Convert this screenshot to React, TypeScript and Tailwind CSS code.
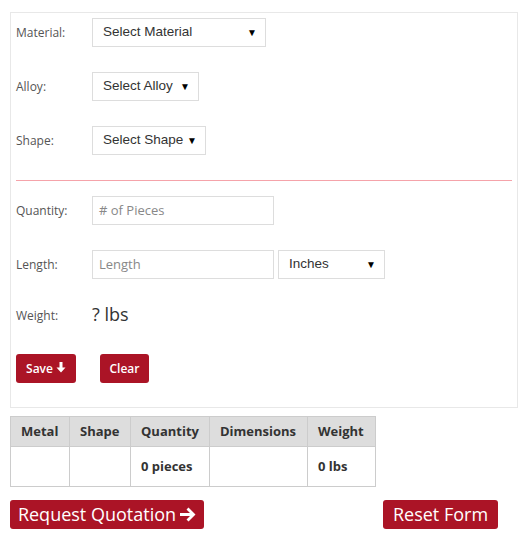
import React from 'react';

const labelCls = 'w-[76px] shrink-0 text-[12px] text-[#555]';
const boxCls =
  'flex items-center border border-[#ddd] bg-white h-[29px] text-[13px] text-[#333]';

const Caret = () => <span className="text-[10px] leading-none text-black">▼</span>;

const SelectBox: React.FC<{ text: string; width: string }> = ({ text, width }) => (
  <div className={`${boxCls} ${width} justify-between pl-[10px] pr-[8px]`} style={{ fontFamily: '"Liberation Sans", Arial, sans-serif' }}>
    <span className="text-[13.5px]">{text}</span>
    <Caret />
  </div>
);

const InputBox: React.FC<{ placeholder: string }> = ({ placeholder }) => (
  <div className={`${boxCls} w-[182px] pl-[6px] text-[#888]`} style={{ fontFamily: '"Open Sans", sans-serif' }}>
    {placeholder}
  </div>
);

const ArrowDown = () => (
  <svg width="10" height="11" viewBox="0 0 10 11" className="inline-block ml-[3px] -mt-[2px]">
    <path d="M3.5 0h3v5.5h3L5 10.5 0.5 5.5h3z" fill="white" />
  </svg>
);

const ArrowRight = () => (
  <svg width="16" height="15" viewBox="0 0 16 15" className="inline-block ml-[4px]">
    <path d="M0 6h10L6.5 2.5 8.5 0.5 15.5 7.5 8.5 14.5 6.5 12.5 10 9H0z" fill="white" />
  </svg>
);

const headers = ['Metal', 'Shape', 'Quantity', 'Dimensions', 'Weight'];
const widths = ['w-[59px]', 'w-[61px]', 'w-[79px]', 'w-[98px]', 'w-[68px]'];
const values = ['', '', '0 pieces', '', '0 lbs'];

export default function App() {
  return (
    <div className="w-[528px] h-[538px] bg-white px-[10px] pt-[12px]" style={{ fontFamily: '"Open Sans", sans-serif' }}>
      <div className="w-[508px] border border-[#e8e8e8] px-[5px] pt-[5px] pb-[24px]">
        <div className="flex items-center">
          <span className={labelCls}>Material:</span>
          <SelectBox text="Select Material" width="w-[174px]" />
        </div>
        <div className="flex items-center mt-[25px]">
          <span className={labelCls}>Alloy:</span>
          <SelectBox text="Select Alloy" width="w-[107px]" />
        </div>
        <div className="flex items-center mt-[25px]">
          <span className={labelCls}>Shape:</span>
          <SelectBox text="Select Shape" width="w-[114px]" />
        </div>

        <div className="h-px bg-[#f5a3aa] mt-[25px]" />

        <div className="flex items-center mt-[15px]">
          <span className={labelCls}>Quantity:</span>
          <InputBox placeholder="# of Pieces" />
        </div>
        <div className="flex items-center mt-[25px]">
          <span className={labelCls}>Length:</span>
          <InputBox placeholder="Length" />
          <div className="ml-[4px]">
            <SelectBox text="Inches" width="w-[107px]" />
          </div>
        </div>
        <div className="flex items-center mt-[26px]">
          <span className={labelCls}>Weight:</span>
          <span className="text-[18px] text-[#333] leading-[24px] -mt-[3px]">? lbs</span>
        </div>

        <div className="flex mt-[28px]">
          <button className="h-[29px] w-[60px] rounded-[3px] bg-[#ab1426] text-white text-[12px] font-semibold flex items-center justify-center">
            Save
            <ArrowDown />
          </button>
          <button className="ml-[24px] h-[29px] w-[49px] rounded-[3px] bg-[#ab1426] text-white text-[12px] font-semibold">
            Clear
          </button>
        </div>
      </div>

      <table className="mt-[8px] border-collapse text-[13px] font-bold text-[#333]">
        <thead>
          <tr className="bg-[#ddd] h-[30px]">
            {headers.map((h, i) => (
              <th key={h} className={`${widths[i]} border border-[#ccc] px-[10px] text-left font-bold`}>
                {h}
              </th>
            ))}
          </tr>
        </thead>
        <tbody>
          <tr className="h-[40px]">
            {values.map((v, i) => (
              <td key={i} className={`${widths[i]} border border-[#ccc] px-[10px]`}>
                {v}
              </td>
            ))}
          </tr>
        </tbody>
      </table>

      <div className="flex mt-[13px] pr-[20px]">
        <button className="h-[29px] w-[194px] rounded-[3px] bg-[#ab1426] text-white text-[18px] flex items-center justify-center">
          Request Quotation
          <ArrowRight />
        </button>
        <button className="ml-auto h-[29px] w-[115px] rounded-[3px] bg-[#ab1426] text-white text-[18px]">
          Reset Form
        </button>
      </div>
    </div>
  );
}
